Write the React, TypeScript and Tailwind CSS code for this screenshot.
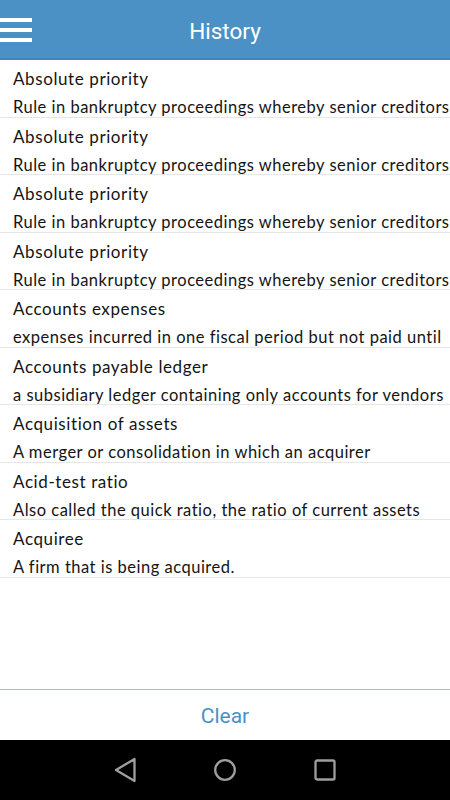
import React from 'react';

type Entry = { term: string; definition: string };

const history: Entry[] = [
  { term: 'Absolute priority', definition: 'Rule in bankruptcy proceedings whereby senior creditors' },
  { term: 'Absolute priority', definition: 'Rule in bankruptcy proceedings whereby senior creditors' },
  { term: 'Absolute priority', definition: 'Rule in bankruptcy proceedings whereby senior creditors' },
  { term: 'Absolute priority', definition: 'Rule in bankruptcy proceedings whereby senior creditors' },
  { term: 'Accounts expenses', definition: 'expenses incurred in one fiscal period but not paid until' },
  { term: 'Accounts payable ledger', definition: 'a subsidiary ledger containing only accounts for vendors' },
  { term: 'Acquisition of assets', definition: 'A merger or consolidation in which an acquirer' },
  { term: 'Acid-test ratio', definition: 'Also called the quick ratio, the ratio of current assets' },
  { term: 'Acquiree', definition: 'A firm that is being acquired.' },
];

const App = () => {
  return (
    <div className="w-[450px] h-[800px] flex flex-col bg-white overflow-hidden">
      {/* Header */}
      <header className="h-[60px] flex-none relative flex items-center justify-center pt-[3px] bg-[#4b91c5] border-b-2 border-[#3f86bd]">
        <button className="absolute left-0 top-[18px] flex flex-col gap-[6px]">
          <span className="block w-[32px] h-[4px] bg-white" />
          <span className="block w-[32px] h-[4px] bg-white" />
          <span className="block w-[32px] h-[4px] bg-white" />
        </button>
        <h1 className="text-white text-[22.5px] leading-[28px] font-['Roboto',sans-serif]">History</h1>
      </header>

      {/* List */}
      <ul className="flex-1 overflow-hidden font-['Lato','Open_Sans',sans-serif] text-[#141414]">
        {history.map((item, i) => (
          <li key={i} className="h-[57.5px] pl-[13px] border-b border-[#e6e6e6] flex flex-col whitespace-nowrap overflow-hidden">
            <div className="mt-[9px] text-[17px] leading-[20px] tracking-[0.6px]">{item.term}</div>
            <div className="mt-[8px] text-[16.5px] leading-[20px] tracking-[0.5px]">{item.definition}</div>
          </li>
        ))}
      </ul>

      {/* Clear button */}
      <div className="h-[51px] flex-none border-t border-[#a3bcd9] flex items-center justify-center pt-[2px]">
        <button className="text-[#4b91c5] text-[21px] leading-[26px] font-['Roboto',sans-serif]">Clear</button>
      </div>

      {/* Android nav bar */}
      <nav className="h-[60px] flex-none bg-black flex items-center justify-center">
        <div className="w-[100px] flex justify-center">
          <svg width="24" height="26" viewBox="0 0 24 26">
            <path d="M21.5 2 L3 13 L21.5 24 Z" fill="none" stroke="#9e9e9e" strokeWidth="2.3" strokeLinejoin="round" />
          </svg>
        </div>
        <div className="w-[100px] flex justify-center">
          <svg width="24" height="24" viewBox="0 0 24 24">
            <circle cx="12" cy="12" r="9.8" fill="none" stroke="#9e9e9e" strokeWidth="2.3" />
          </svg>
        </div>
        <div className="w-[100px] flex justify-center">
          <svg width="22" height="22" viewBox="0 0 22 22">
            <rect x="1.5" y="1.5" width="19" height="19" rx="1.5" fill="none" stroke="#9e9e9e" strokeWidth="2.3" />
          </svg>
        </div>
      </nav>
    </div>
  );
};

export default App;
